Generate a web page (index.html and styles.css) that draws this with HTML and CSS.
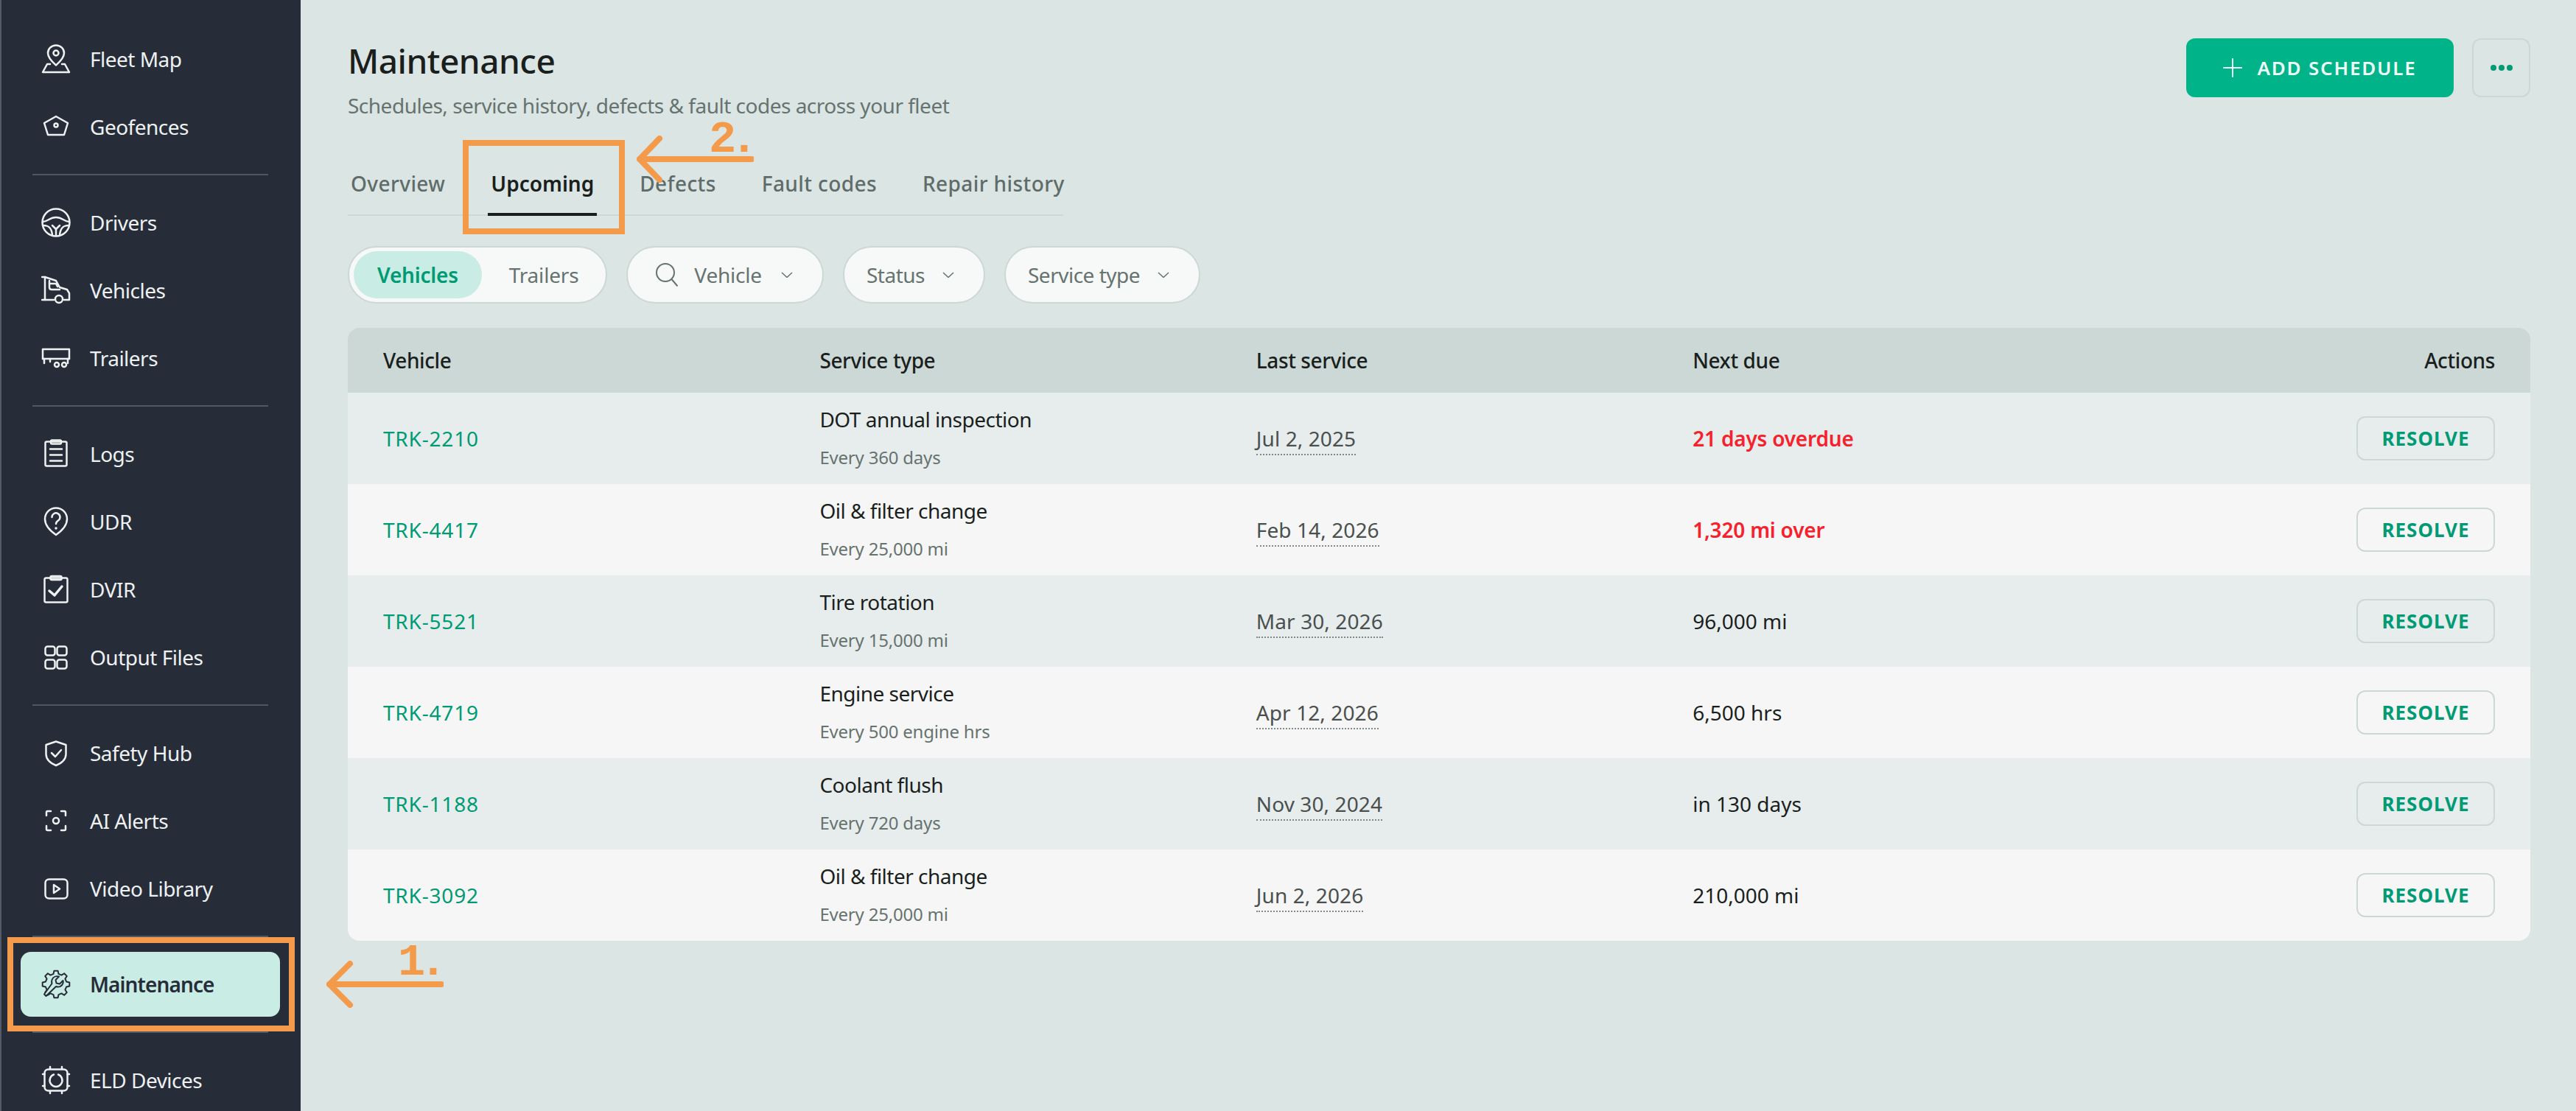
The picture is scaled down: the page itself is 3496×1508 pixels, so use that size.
FILE: index.html
```html
<!DOCTYPE html>
<html lang="en">
<head>
    <meta charset="UTF-8">
    <meta name="viewport" content="width=device-width, initial-scale=1.0">
    <title>Maintenance</title>
    <link rel="stylesheet" href="styles.css">
</head>
<body>
    <aside class="sidebar">
        <nav class="nav-group">
            <a class="nav-item"><svg class="nav-icon" viewBox="0 0 40 40"><path d="M20 1.500C13.5 1.500 9 6.500 9 12c0 7 7 13 11 16.500C24 25 31 19 31 12c0-5.500-4.500-10.500-11-10.500z"/><circle cx="20" cy="12" r="3.500"/><path d="M12 27H8L2 38h36l-6-11h-4"/></svg>Fleet Map</a>
            <a class="nav-item"><svg class="nav-icon" viewBox="0 0 40 40"><path d="M20 6l16 9-5 16H9L4 15z"/><circle cx="20" cy="18" r="2.500"/></svg>Geofences</a>
        </nav>
        <hr class="nav-divider">
        <nav class="nav-group">
            <a class="nav-item"><svg class="nav-icon" viewBox="0 0 40 40"><circle cx="20" cy="20" r="18.500"/><path d="M2 19c7 0 9-6 18-6s11 6 18 6"/><path d="M3 24c7 0 11 3 12 13"/><path d="M37 24c-7 0-11 3-12 13"/><path d="M15 24l5 5 5-5"/><path d="M20 29v9"/></svg>Drivers</a>
            <a class="nav-item"><svg class="nav-icon" viewBox="0 0 40 40"><path d="M1 2h4l15 5 5 9 10 3 3 5v9h-7"/><path d="M5 2v31"/><path d="M1 33h16"/><path d="M11 7v9c0 2 1 3 3 3h11"/><path d="M11 11h9l2 4"/><circle cx="24" cy="32" r="5"/></svg>Vehicles</a>
            <a class="nav-item"><svg class="nav-icon" viewBox="0 0 40 40"><path d="M4 27v-6H2V8h36v13h-2v6"/><path d="M2 21h36"/><path d="M12 21v4"/><circle cx="21" cy="29" r="3"/><circle cx="31" cy="29" r="3"/></svg>Trailers</a>
        </nav>
        <hr class="nav-divider">
        <nav class="nav-group">
            <a class="nav-item"><svg class="nav-icon" viewBox="0 0 40 40"><rect x="5.500" y="3.500" width="29" height="33" rx="2"/><rect x="13" y="1.500" width="14" height="5" rx="1.500"/><path d="M12 13.500h16M12 21.500h16M12 29.500h16"/></svg>Logs</a>
            <a class="nav-item"><svg class="nav-icon" viewBox="0 0 40 40"><path d="M20 1.500C11.500 1.500 5 8 5 16.500 5 26 15 34.500 20 38c5-3.500 15-12 15-21.500C35 8 28.500 1.500 20 1.500z"/><path d="M14.500 14a5.500 5.500 0 1 1 8.500 4.500c-2 1.300-3 2.500-3 4.500"/><circle class="dot" cx="20" cy="29" r="1.800"/></svg>UDR</a>
            <a class="nav-item"><svg class="nav-icon" viewBox="0 0 40 40"><rect x="4.500" y="4.500" width="31" height="33" rx="2"/><rect x="12.500" y="2" width="15" height="5" rx="1.500"/><path class="thick" d="M11 22l7 6 10-12"/></svg>DVIR</a>
            <a class="nav-item"><svg class="nav-icon" viewBox="0 0 40 40"><rect x="5.500" y="5.500" width="13" height="12" rx="3"/><rect x="21.500" y="5.500" width="13" height="12" rx="3"/><rect x="5.500" y="23.500" width="13" height="12" rx="3"/><rect x="21.500" y="23.500" width="13" height="12" rx="3"/></svg>Output Files</a>
        </nav>
        <hr class="nav-divider">
        <nav class="nav-group">
            <a class="nav-item"><svg class="nav-icon" viewBox="0 0 40 40"><path d="M20 4.500L33.500 9v12.500c0 8-7.500 13-13.500 15.500C14 34.500 6.500 29.500 6.500 21.500V9z"/><path d="M14 20l5 5 8-9"/></svg>Safety Hub</a>
            <a class="nav-item"><svg class="nav-icon" viewBox="0 0 40 40"><path d="M7 13V8.500C7 7.500 7.500 7 8.500 7H13M27 7h4.500c1 0 1.500.5 1.500 1.500V13M33 27v4.500c0 1-.5 1.500-1.500 1.500H27M13 33H8.500C7.500 33 7 32.500 7 31.500V27"/><circle cx="20" cy="20" r="4"/></svg>AI Alerts</a>
            <a class="nav-item"><svg class="nav-icon" viewBox="0 0 40 40"><rect x="5.500" y="7.500" width="30" height="26" rx="5"/><path d="M17 15l8 5.500-8 5.500z"/></svg>Video Library</a>
        </nav>
        <hr class="nav-divider">
        <nav class="nav-group current">
            <a class="nav-item active"><svg class="nav-icon" viewBox="0 0 40 40"><polygon transform="translate(20 20)" points="14.07,-3.51 18.32,-2.57 18.32,2.57 14.07,3.51 12.43,7.47 14.77,11.13 11.13,14.77 7.47,12.43 3.51,14.07 2.57,18.32 -2.57,18.32 -3.51,14.07 -7.47,12.43 -11.13,14.77 -14.77,11.13 -12.43,7.47 -14.07,3.51 -18.32,2.57 -18.32,-2.57 -14.07,-3.51 -12.43,-7.47 -14.77,-11.13 -11.13,-14.77 -7.47,-12.43 -3.51,-14.07 -2.57,-18.32 2.57,-18.32 3.51,-14.07 7.47,-12.43 11.13,-14.77 14.77,-11.13 12.43,-7.47"/><path class="wrench" d="M4 33.500l2.500 2.500L20 23c4 1.500 8.500-.5 9.500-4.500.3-1.300.3-2.500 0-3.500l-4.500 4.500-4.500-1-1-4.500 4.500-4.500c-4-1-8 .5-9.500 4.500-.5 1.500-.5 3.500 0 5z"/></svg>Maintenance</a>
        </nav>
        <hr class="nav-divider">
        <nav class="nav-group">
            <a class="nav-item"><svg class="nav-icon" viewBox="0 0 40 40"><rect x="4.500" y="5.500" width="31" height="29" rx="5"/><path d="M12 2v3M28 2v3M12 35v3M28 35v3M2 12h2.500M2 28h2.500M35.500 12H38M35.500 28H38"/><path d="M17 12.500a8.500 8.500 0 1 0 6 0"/></svg>ELD Devices</a>
        </nav>
    </aside>

    <main class="content">
        <header class="page-header">
            <div>
                <h1>Maintenance</h1>
                <p class="subtitle">Schedules, service history, defects &amp; fault codes across your fleet</p>
            </div>
            <div class="header-actions">
                <button class="btn-primary"><svg class="plus" viewBox="0 0 26 26"><path d="M13 1v24M1 13h24"/></svg>ADD SCHEDULE</button>
                <button class="btn-more"><span></span><span></span><span></span></button>
            </div>
        </header>

        <div class="tabs">
            <a class="tab">Overview</a>
            <a class="tab active">Upcoming</a>
            <a class="tab">Defects</a>
            <a class="tab">Fault codes</a>
            <a class="tab">Repair history</a>
        </div>

        <div class="filters">
            <div class="pill segmented">
                <span class="seg active">Vehicles</span>
                <span class="seg">Trailers</span>
            </div>
            <div class="pill pill-search"><svg class="search" viewBox="0 0 32 32"><circle cx="14" cy="13" r="12"/><path d="M22.500 22l8 9.500"/></svg>Vehicle<svg class="chevron" viewBox="0 0 16 8"><path d="M1 1l7 6.500L15 1"/></svg></div>
            <div class="pill">Status<svg class="chevron" viewBox="0 0 16 8"><path d="M1 1l7 6.500L15 1"/></svg></div>
            <div class="pill">Service type<svg class="chevron" viewBox="0 0 16 8"><path d="M1 1l7 6.500L15 1"/></svg></div>
        </div>

        <div class="table-wrap">
            <table>
                <thead>
                    <tr><th>Vehicle</th><th>Service type</th><th>Last service</th><th>Next due</th><th class="right">Actions</th></tr>
                </thead>
                <tbody>
                    <tr>
                        <td><a class="truck">TRK-2210</a></td>
                        <td><div class="service">DOT annual inspection</div><div class="interval">Every 360 days</div></td>
                        <td><span class="date">Jul 2, 2025</span></td>
                        <td class="due overdue">21 days overdue</td>
                        <td class="right"><button class="btn-resolve">RESOLVE</button></td>
                    </tr>
                    <tr>
                        <td><a class="truck">TRK-4417</a></td>
                        <td><div class="service">Oil &amp; filter change</div><div class="interval">Every 25,000 mi</div></td>
                        <td><span class="date">Feb 14, 2026</span></td>
                        <td class="due overdue">1,320 mi over</td>
                        <td class="right"><button class="btn-resolve">RESOLVE</button></td>
                    </tr>
                    <tr>
                        <td><a class="truck">TRK-5521</a></td>
                        <td><div class="service">Tire rotation</div><div class="interval">Every 15,000 mi</div></td>
                        <td><span class="date">Mar 30, 2026</span></td>
                        <td class="due">96,000 mi</td>
                        <td class="right"><button class="btn-resolve">RESOLVE</button></td>
                    </tr>
                    <tr>
                        <td><a class="truck">TRK-4719</a></td>
                        <td><div class="service">Engine service</div><div class="interval">Every 500 engine hrs</div></td>
                        <td><span class="date">Apr 12, 2026</span></td>
                        <td class="due">6,500 hrs</td>
                        <td class="right"><button class="btn-resolve">RESOLVE</button></td>
                    </tr>
                    <tr>
                        <td><a class="truck">TRK-1188</a></td>
                        <td><div class="service">Coolant flush</div><div class="interval">Every 720 days</div></td>
                        <td><span class="date">Nov 30, 2024</span></td>
                        <td class="due">in 130 days</td>
                        <td class="right"><button class="btn-resolve">RESOLVE</button></td>
                    </tr>
                    <tr>
                        <td><a class="truck">TRK-3092</a></td>
                        <td><div class="service">Oil &amp; filter change</div><div class="interval">Every 25,000 mi</div></td>
                        <td><span class="date">Jun 2, 2026</span></td>
                        <td class="due">210,000 mi</td>
                        <td class="right"><button class="btn-resolve">RESOLVE</button></td>
                    </tr>
                </tbody>
            </table>
        </div>
    </main>

    <!-- annotations drawn over the screenshot -->
    <div class="callout-box box-one"></div>
    <div class="callout-box box-two"></div>
    <svg class="arrow arrow-one" viewBox="0 0 160 64"><path d="M157 32H5M33 4L5 32l28 28"/></svg>
    <svg class="arrow arrow-two" viewBox="0 0 160 64"><path d="M157 32H5M32 4L5 32l27 28"/></svg>
    <span class="callout-num num-one">1.</span>
    <span class="callout-num num-two">2.</span>
</body>
</html>
```

FILE: styles.css
```css
* {
  margin: 0;
  padding: 0;
  box-sizing: border-box;
}
body {
  display: flex;
  height: 1508px;
  overflow: hidden;
  background: #dbe5e3;
  color: #1a1f1e;
  font-family: "Noto Sans", "Open Sans", sans-serif;
  font-size: 28px;
  letter-spacing: -0.5px;
}

/* sidebar */
.sidebar {
  width: 408px;
  height: 1508px;
  flex-shrink: 0;
  overflow: hidden;
  padding-top: 34px;
  background: #272c39;
  border-left: 2px solid #555a6b;
}
.nav-item {
  display: flex;
  align-items: center;
  gap: 26px;
  height: 92px;
  padding-left: 54px;
  color: #eef1f1;
}
.nav-icon {
  width: 40px;
  height: 40px;
  flex-shrink: 0;
  fill: none;
  stroke: #eef1f1;
  stroke-width: 2.5;
  stroke-linecap: round;
  stroke-linejoin: round;
}
.nav-icon .dot {
  fill: #eef1f1;
  stroke: none;
}
.nav-icon .thick {
  stroke-width: 3.5;
}
.nav-group.current {
  padding: 2px 0;
}
.nav-item.active {
  height: 88px;
  margin: 0 28px 0 26px;
  padding-left: 28px;
  border-radius: 14px;
  background: #c9ede4;
  color: #272c39;
  font-weight: 600;
  letter-spacing: -0.9px;
}
.nav-item.active .nav-icon {
  stroke: #272c39;
  stroke-width: 2;
}
.nav-item.active .wrench {
  fill: #c9ede4;
}
.nav-divider {
  height: 2px;
  margin: 18px 44px 18px 42px;
  border: 0;
  background: #505667;
}

/* page header */
.content {
  flex: 1;
  padding: 52px 62px 0 64px;
}
.page-header {
  display: flex;
  justify-content: space-between;
  align-items: flex-start;
}
h1 {
  font-size: 46px;
  line-height: 60px;
  font-weight: 500;
}
.subtitle {
  margin-top: 11px;
  line-height: 40px;
  color: #66736f;
}
.header-actions {
  display: flex;
  gap: 25px;
}
button {
  font-family: inherit;
  cursor: pointer;
}
.btn-primary {
  display: flex;
  align-items: center;
  justify-content: center;
  gap: 20px;
  width: 363px;
  height: 80px;
  border: 0;
  border-radius: 12px;
  background: #00b388;
  color: #eefaf6;
  font-size: 26px;
  font-weight: 600;
  letter-spacing: 1.8px;
}
.plus {
  width: 26px;
  height: 26px;
  fill: none;
  stroke: #eefaf6;
  stroke-width: 2;
  stroke-linecap: round;
}
.btn-more {
  display: flex;
  align-items: center;
  justify-content: center;
  gap: 3px;
  width: 79px;
  height: 80px;
  border: 2px solid #ccd8d5;
  border-radius: 12px;
  background: transparent;
}
.btn-more span {
  width: 8px;
  height: 8px;
  border-radius: 50%;
  background: #009b74;
}

/* tabs */
.tabs {
  display: flex;
  gap: 54px;
  width: 971px;
  height: 90px;
  margin-top: 40px;
  border-bottom: 2px solid #ccd8d5;
}
.tab {
  flex-shrink: 0;
  height: 90px;
  padding: 26px 4px 18px;
  line-height: 40px;
  white-space: nowrap;
  color: #5f6c69;
  font-weight: 500;
  letter-spacing: 0.4px;
}
.tab.active {
  border-bottom: 4px solid #1a1f1e;
  color: #1a1f1e;
  font-weight: 600;
  letter-spacing: 0;
}

/* filters */
.filters {
  display: flex;
  gap: 26px;
  margin-top: 41px;
}
.pill {
  display: flex;
  align-items: center;
  height: 78px;
  padding: 0 40px 0 30px;
  border: 2px solid #ccd8d5;
  border-radius: 39px;
  background: #f7f8f8;
  color: #66736f;
}
.pill-search {
  padding: 0 40px 0 37px;
  letter-spacing: -0.2px;
}
.pill-search .chevron {
  margin-left: 26px;
}
.segmented {
  padding: 0 0 0 6px;
}
.seg {
  padding: 0 37px;
  line-height: 64px;
  border-radius: 32px;
  letter-spacing: -0.2px;
}
.seg.active {
  padding: 0 32px;
  background: #c9ede4;
  color: #009b74;
  font-weight: 600;
}
.search {
  width: 32px;
  height: 32px;
  margin-right: 21px;
  fill: none;
  stroke: #66736f;
  stroke-width: 2;
}
.chevron {
  width: 16px;
  height: 8px;
  margin-left: 24px;
  fill: none;
  stroke: #66736f;
  stroke-width: 1.500;
}

/* table */
.table-wrap {
  margin-top: 33px;
  border-radius: 16px;
  overflow: hidden;
}
table {
  width: 100%;
  border-collapse: collapse;
  table-layout: fixed;
}
th {
  height: 88px;
  padding: 0 48px;
  background: #ccd8d5;
  text-align: left;
  font-weight: 500;
  letter-spacing: -0.4px;
}
td {
  height: 124px;
  padding: 0 48px;
}
tbody tr:nth-child(odd) {
  background: #e6edec;
}
tbody tr:nth-child(even) {
  background: #f6f6f6;
}
th.right,
td.right {
  text-align: right;
}
.truck {
  color: #009b74;
  letter-spacing: 0.8px;
}
.service {
  line-height: 40px;
}
.interval {
  margin-top: 17px;
  margin-bottom: 6px;
  font-size: 24px;
  line-height: 30px;
  letter-spacing: -0.2px;
  color: #66736f;
}
.date {
  padding-bottom: 2px;
  border-bottom: 2px dotted #7d8a87;
  color: #4a504f;
  letter-spacing: 0.1px;
}
.due {
  letter-spacing: 0;
}
.overdue {
  color: #f5222d;
  font-weight: 600;
  letter-spacing: -0.2px;
}
.btn-resolve {
  width: 188px;
  height: 60px;
  border: 2px solid #ccd8d5;
  border-radius: 12px;
  background: transparent;
  color: #009b74;
  font-size: 26px;
  font-weight: 700;
  letter-spacing: 1px;
  vertical-align: middle;
}

/* annotations */
.callout-box {
  position: absolute;
  border: 8px solid #f49a4b;
}
.box-one {
  left: 10px;
  top: 1272px;
  width: 390px;
  height: 128px;
}
.box-two {
  left: 628px;
  top: 190px;
  width: 220px;
  height: 128px;
}
.arrow {
  position: absolute;
  width: 160px;
  height: 64px;
  fill: none;
  stroke: #f49a4b;
  stroke-width: 8;
  stroke-linecap: round;
  stroke-linejoin: round;
}
.arrow-one {
  left: 442px;
  top: 1304px;
}
.arrow-two {
  left: 863px;
  top: 184px;
}
.callout-num {
  position: absolute;
  color: #f49a4b;
  font-family: "Liberation Mono", monospace;
  font-size: 62px;
  font-weight: 700;
  line-height: 44px;
  letter-spacing: -8px;
}
.num-one {
  left: 540px;
  top: 1285px;
}
.num-two {
  left: 962px;
  top: 168px;
}
```
